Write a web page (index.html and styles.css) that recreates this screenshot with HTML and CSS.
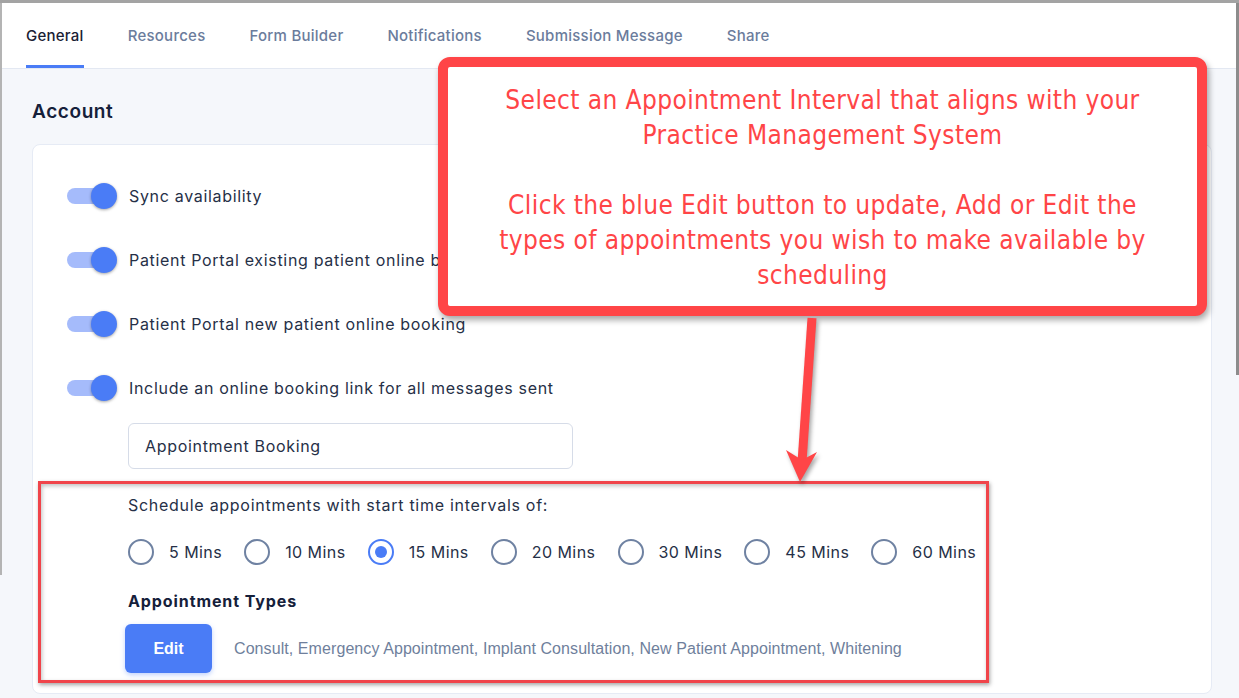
FILE: index.html
```html
<!DOCTYPE html>
<html lang="en">
<head>
    <meta charset="UTF-8">
    <meta name="viewport" content="width=device-width, initial-scale=1.0">
    <title>Online Booking - General</title>
    <link rel="stylesheet" href="styles.css">
</head>
<body>

    <nav class="tabs">
        <a class="tab active">General</a>
        <a class="tab">Resources</a>
        <a class="tab">Form Builder</a>
        <a class="tab">Notifications</a>
        <a class="tab">Submission Message</a>
        <a class="tab">Share</a>
    </nav>

    <main class="content">
        <h2 class="section-title">Account</h2>

        <div class="card">
            <label class="toggle-row">
                <span class="toggle"><span class="track"></span><span class="knob"></span></span>
                Sync availability
            </label>
            <label class="toggle-row">
                <span class="toggle"><span class="track"></span><span class="knob"></span></span>
                Patient Portal existing patient online booking
            </label>
            <label class="toggle-row">
                <span class="toggle"><span class="track"></span><span class="knob"></span></span>
                Patient Portal new patient online booking
            </label>
            <label class="toggle-row">
                <span class="toggle"><span class="track"></span><span class="knob"></span></span>
                Include an online booking link for all messages sent
            </label>

            <input type="text" class="text-input" value="Appointment Booking">

            <div class="schedule">
                <p class="field-label">Schedule appointments with start time intervals of:</p>
                <div class="radio-group">
                    <label class="radio"><span class="circle"></span>5 Mins</label>
                    <label class="radio"><span class="circle"></span>10 Mins</label>
                    <label class="radio"><span class="circle checked"></span>15 Mins</label>
                    <label class="radio"><span class="circle"></span>20 Mins</label>
                    <label class="radio"><span class="circle"></span>30 Mins</label>
                    <label class="radio"><span class="circle"></span>45 Mins</label>
                    <label class="radio"><span class="circle"></span>60 Mins</label>
                </div>

                <h3 class="sub-title">Appointment Types</h3>
                <div class="types-row">
                    <button type="button" class="edit-btn">Edit</button>
                    <span class="types-list">Consult, Emergency Appointment, Implant Consultation, New Patient Appointment, Whitening</span>
                </div>
            </div>

            <!-- annotation frame round the interval settings -->
            <div class="highlight-box"></div>
        </div>
    </main>

    <div class="callout">
        <p>Select an Appointment Interval that aligns with your<br>Practice Management System</p>
        <p>Click the blue Edit button to update, Add or Edit the<br>types of appointments you wish to make available by<br>scheduling</p>
    </div>

    <svg class="arrow" width="60" height="180" viewBox="770 310 60 180">
        <line x1="812" y1="318" x2="802" y2="462" stroke="#ff4547" stroke-width="9"/>
        <polygon points="786,450 802,460 817,452 800,482" fill="#ff4547"/>
    </svg>

    <div class="frame-left"></div>
    <div class="scrollbar"></div>

</body>
</html>
```

FILE: styles.css
```css
body {
    font-family: 'Inter', 'Noto Sans', sans-serif;
    background-color: #f5f7fb;
    color: #222a3d;
    margin: 0;
    padding: 0;
    border-top: 3px solid #a3a3a3;
    min-height: 695px;
    overflow: hidden;
}

/* tabs */

.tabs {
    display: flex;
    gap: 44px;
    height: 65px;
    padding: 0 0 0 26px;
    background-color: #fff;
    border-bottom: 1px solid #e3e8f2;
}

.tab {
    display: flex;
    align-items: center;
    padding-top: 3px;
    box-sizing: border-box;
    height: 65px;
    border-bottom: 3px solid transparent;
    font-size: 15px;
    font-weight: 500;
    letter-spacing: 0.25px;
    color: #6b7c9c;
    cursor: pointer;
}

.tab.active {
    color: #192034;
    border-bottom-color: #4a7cf6;
}

/* content */

.content {
    position: relative;
    padding: 31px 27px 0 32px;
}

.section-title {
    margin: 0 0 20px 0;
    font-size: 19px;
    line-height: 24px;
    font-weight: 600;
    letter-spacing: 0.6px;
    color: #15203a;
}

.card {
    position: relative;
    background-color: #fff;
    border: 1px solid #e6ebf5;
    border-radius: 8px;
    padding: 38px 30px 20px 34px;
}

.toggle-row {
    display: flex;
    align-items: center;
    gap: 12px;
    height: 26px;
    margin-bottom: 38px;
    font-size: 16px;
    letter-spacing: 0.68px;
    color: #263047;
}

.toggle-row:nth-of-type(4) {
    margin-bottom: 22px;
}

.toggle {
    position: relative;
    width: 50px;
    height: 26px;
    flex-shrink: 0;
}

.track {
    position: absolute;
    left: 0;
    top: 5px;
    width: 44px;
    height: 16px;
    border-radius: 8px;
    background-color: #a5bbfb;
}

.knob {
    position: absolute;
    left: 24px;
    top: 0;
    width: 26px;
    height: 26px;
    border-radius: 50%;
    background-color: #4a7cf6;
    box-shadow: 0 1px 3px rgba(0, 0, 0, 0.35);
}

.text-input {
    display: block;
    width: 445px;
    height: 46px;
    margin: 0 0 26px 61px;
    padding: 0 16px;
    box-sizing: border-box;
    border: 1px solid #d6dce8;
    border-radius: 6px;
    font-family: inherit;
    font-size: 16px;
    letter-spacing: 0.68px;
    color: #263047;
    outline: none;
}

.schedule {
    margin-left: 61px;
}

.field-label {
    margin: 0 0 24px 0;
    font-size: 16px;
    line-height: 20px;
    letter-spacing: 0.72px;
    color: #263047;
}

.radio-group {
    display: flex;
    gap: 22px;
    margin-bottom: 26px;
}

.radio {
    display: flex;
    align-items: center;
    gap: 15px;
    height: 26px;
    font-size: 16px;
    letter-spacing: 0.45px;
    color: #263047;
}

.circle {
    width: 26px;
    height: 26px;
    box-sizing: border-box;
    border: 2.5px solid #6f82a2;
    border-radius: 50%;
    flex-shrink: 0;
    display: flex;
    align-items: center;
    justify-content: center;
}

.circle.checked {
    border-color: #4a7cf6;
}

.circle.checked::after {
    content: "";
    width: 12px;
    height: 12px;
    border-radius: 50%;
    background-color: #4a7cf6;
}

.sub-title {
    margin: 0 0 13px 0;
    font-size: 16px;
    line-height: 20px;
    font-weight: 700;
    letter-spacing: 0.9px;
    color: #15203a;
}

.types-row {
    display: flex;
    align-items: center;
    gap: 22px;
}

.edit-btn {
    width: 87px;
    height: 49px;
    margin-left: -3px;
    background-color: #4a7cf6;
    color: #fff;
    border: none;
    border-radius: 6px;
    font-family: 'Liberation Sans', Arial, sans-serif;
    font-size: 16px;
    font-weight: bold;
    box-shadow: 0 2px 5px rgba(74, 124, 246, 0.35);
    cursor: pointer;
}

.types-list {
    font-family: 'Liberation Sans', Arial, sans-serif;
    font-size: 16px;
    letter-spacing: 0.08px;
    color: #6f7f9c;
}

/* annotations */

.highlight-box {
    position: absolute;
    left: 5px;
    top: 336px;
    width: 951px;
    height: 202px;
    box-sizing: border-box;
    border: 3px solid #f0444a;
    box-shadow: 1px 2px 4px rgba(0, 0, 0, 0.35), inset 1px 2px 4px rgba(0, 0, 0, 0.25);
}

.callout {
    position: absolute;
    left: 438px;
    top: 57px;
    width: 769px;
    height: 259px;
    box-sizing: border-box;
    padding: 16px 10px 0 10px;
    background-color: #fff;
    border: 10px solid #ff4547;
    border-radius: 12px;
    box-shadow: 2px 4px 6px rgba(0, 0, 0, 0.35);
    text-align: center;
    font-family: 'DejaVu Sans Condensed', 'DejaVu Sans', sans-serif;
    font-size: 26px;
    line-height: 35px;
    letter-spacing: 0.4px;
    color: #ff4547;
}

.callout p {
    margin: 0 0 35px 0;
}

.arrow {
    position: absolute;
    left: 770px;
    top: 310px;
    filter: drop-shadow(2px 3px 2px rgba(0, 0, 0, 0.35));
}

.frame-left {
    position: absolute;
    left: 0;
    top: 3px;
    width: 2px;
    height: 572px;
    background-color: #b4b4b4;
}

.scrollbar {
    position: absolute;
    right: 0;
    top: 3px;
    width: 3px;
    height: 372px;
    background-color: #8c8c8c;
}
```
